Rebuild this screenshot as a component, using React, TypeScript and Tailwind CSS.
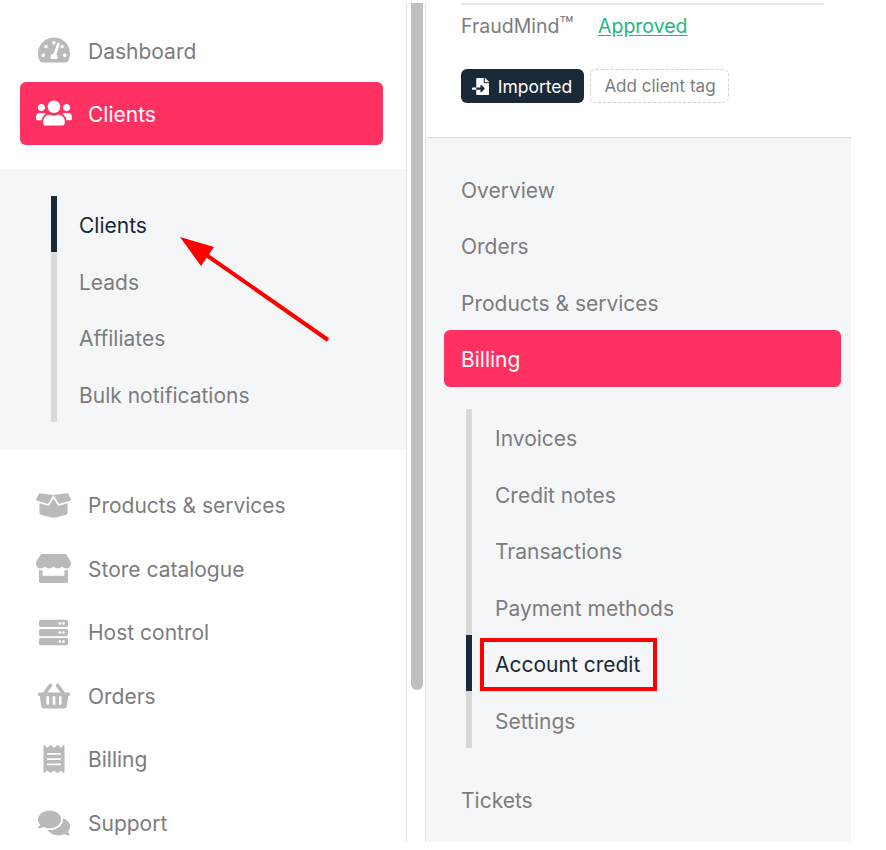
import React from 'react';
import {
  FaTachometerAlt,
  FaUsers,
  FaBoxOpen,
  FaStore,
  FaServer,
  FaShoppingBasket,
  FaReceipt,
  FaComments,
  FaFileImport,
} from 'react-icons/fa';

const mainBottom = [
  { label: 'Products & services', icon: FaBoxOpen, size: 35 },
  { label: 'Store catalogue', icon: FaStore, size: 35 },
  { label: 'Host control', icon: FaServer, size: 29 },
  { label: 'Orders', icon: FaShoppingBasket, size: 32 },
  { label: 'Billing', icon: FaReceipt, size: 28 },
  { label: 'Support', icon: FaComments, size: 32 },
];

function NavRow({ label, icon: Icon, size, textClass = 'pt-[1px]' }: { label: string; icon: any; size: number; textClass?: string }) {
  return (
    <div className="flex h-[63.5px] items-center">
      <div className="flex w-[88px] shrink-0 justify-center pl-[19px]">
        <Icon size={size} className="text-[#bababa]" />
      </div>
      <span className={`${textClass} text-[#7c7c80]`}>{label}</span>
    </div>
  );
}

function SubList({ items, active }: { items: string[]; active: string }) {
  return (
    <div className="flex flex-col border-l-[6px] border-[#d9d9d9]">
      {items.map((item) => (
        <div key={item} className="relative flex h-[56.5px] items-center pt-[4px]">
          {item === active && <div className="absolute -left-[6px] top-0 h-full w-[6px] bg-[#1a2937]" />}
          <span className={item === active ? 'text-[#1a2937]' : 'text-[#7c7c80]'}>{item}</span>
        </div>
      ))}
    </div>
  );
}

export default function App() {
  return (
    <div className="relative h-[850px] w-[886px] overflow-hidden bg-white font-['Inter',sans-serif] text-[21px]">
      <div className="flex h-[842px] w-[851px] pt-[3px]">
        {/* Main sidebar */}
        <div className="w-[406px] shrink-0 overflow-hidden pt-[15px]">
          <NavRow label="Dashboard" icon={FaTachometerAlt} size={32} textClass="pt-[3px]" />
          <div className="ml-[20px] mr-[23px] flex h-[63px] items-center rounded-md bg-[#ff3162] text-white">
            <div className="flex w-[68px] shrink-0 justify-center">
              <FaUsers size={36} />
            </div>
            <span className="pt-[3px]">Clients</span>
          </div>
          <div className="mt-[24px] bg-[#f5f6f8] pb-[28px] pl-[51px] pt-[27px]">
            <div className="[&>div>div>span]:ml-[22px]">
              <SubList items={['Clients', 'Leads', 'Affiliates', 'Bulk notifications']} active="Clients" />
            </div>
          </div>
          <div className="mt-[24px]">
            {mainBottom.map((row) => (
              <NavRow key={row.label} {...row} />
            ))}
          </div>
        </div>

        {/* Scrollbar */}
        <div className="w-[20px] shrink-0 border-x border-[#e4e4e4] px-[4px]">
          <div className="h-[687px] w-[12px] rounded-b-md bg-[#bfbfbf]" />
        </div>

        {/* Client panel */}
        <div className="flex min-w-0 flex-1 flex-col">
          <div className="h-[135px] border-b border-[#dcdcdc] px-[35px]">
            <div className="mr-[-8px] h-[2px] bg-[#e8e8e8]" />
            <div className="mt-[8px] flex h-[28px] items-center text-[19.5px] text-[#7c7c80]">
              <span className="w-[137px]">
                FraudMind<span className="text-[23px] leading-none">™</span>
              </span>
              <span className="text-[#1db87f] underline underline-offset-2">Approved</span>
            </div>
            <div className="mt-[28px] flex items-center gap-[6px]">
              <div className="flex h-[34px] w-[123px] items-center justify-center gap-[9px] rounded-md bg-[#1a2937] pr-[1px] text-[17.5px] text-white">
                <FaFileImport size={17} />
                <span className="pt-[2px]">Imported</span>
              </div>
              <div className="flex h-[34px] w-[139px] items-center justify-center rounded-md border border-dashed border-[#cfcfcf] pl-[1px] pt-[2px] text-[17px] text-[#7c7c80]">
                Add client tag
              </div>
            </div>
          </div>
          <div className="flex-1 bg-[#f5f6f8] pt-[24px]">
            {['Overview', 'Orders', 'Products & services'].map((item) => (
              <div key={item} className="flex h-[56.5px] items-center pl-[35px] text-[#7c7c80]">
                {item}
              </div>
            ))}
            <div className="ml-[18px] mr-[10px] mt-[-2px] flex h-[57px] items-center rounded-md bg-[#ff3162] pl-[17px] pt-[3px] text-white">
              Billing
            </div>
            <div className="ml-[40px] mt-[22px] [&>div>div>span]:ml-[23px]">
              <SubList
                items={['Invoices', 'Credit notes', 'Transactions', 'Payment methods', 'Account credit', 'Settings']}
                active="Account credit"
              />
            </div>
            <div className="mt-[24px] flex h-[56px] items-center pl-[35px] pt-[2px] text-[#7c7c80]">Tickets</div>
          </div>
        </div>
      </div>

      {/* Annotations */}
      <svg className="absolute left-[175px] top-[232px]" width="160" height="114" viewBox="0 0 160 114">
        <line x1="153" y1="108" x2="30" y2="22" stroke="#ff0000" strokeWidth="4" />
        <polygon points="5,5 39,15 26,34" fill="#ff0000" />
      </svg>
      <div className="absolute left-[480px] top-[638px] h-[53px] w-[177px] border-4 border-[#ff0000]" />
    </div>
  );
}
